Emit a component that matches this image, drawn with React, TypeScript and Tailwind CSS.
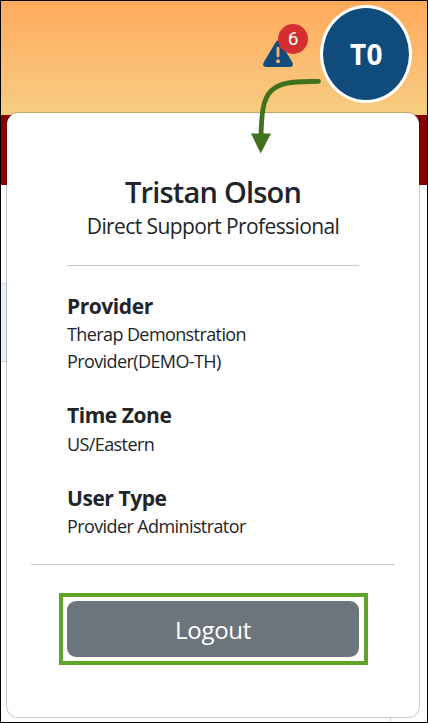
import type { ReactNode } from 'react';

function Detail({ title, children, className }: { title: string; children: ReactNode; className: string }) {
  return (
    <section className={`flex flex-col ${className}`}>
      <h2 className="text-[21px] leading-[28px] font-bold tracking-[-0.45px]">{title}</h2>
      <div className="text-[18px] leading-[27px] tracking-[-0.6px]">{children}</div>
    </section>
  );
}

function AlertButton() {
  return (
    <div className="relative mt-[23px] h-[44px] w-[46px]">
      <svg className="absolute top-[16px] left-0 h-[27px] w-[30px]" viewBox="0 0 30 28" preserveAspectRatio="none">
        <path d="M13 1.8Q15 -1 17 1.8L29.4 23.3Q31 27.5 27.3 28H2.7Q-1 27.5.6 23.3Z" fill="#0f4c7c" />
        <path d="M15 8.5V16.5" stroke="#fcb267" strokeWidth="2.8" strokeLinecap="round" />
        <circle cx="15" cy="22" r="2" fill="#fcb267" />
      </svg>
      <span className="absolute top-0 left-[15px] flex h-[30px] w-[30px] items-center justify-center rounded-full bg-[#d32f2f] pb-px font-['Roboto',sans-serif] text-[19px] leading-none text-white">6</span>
    </div>
  );
}

export default function App() {
  return (
    <div className="relative h-[723px] w-[428px] overflow-hidden border border-black bg-white font-['Open_Sans','Noto_Sans',sans-serif] text-[#212529]">
      <header className="flex h-[114px] justify-end bg-linear-to-b from-[#ffaa5c] to-[#f6cd82] pr-[15px]">
        <AlertButton />
        <div className="mt-[4px] ml-[11px] flex h-[98px] w-[92px] items-center justify-center rounded-[50%] border-3 border-white bg-[#0f4c7c] pb-px pl-px font-['Noto_Sans',sans-serif] text-[28px] font-bold tracking-[0.5px] text-white">T0</div>
      </header>
      <div className="h-[70px] bg-[#880000]" />
      <div className="mt-[98px] h-[79px] w-[20px] border-y border-[#d3d9df] bg-[#e5f1fb]" />
      <div className="ml-[389px] h-[361px] border-l border-[#d5d5d5]" />

      <main className="absolute top-[111px] left-[5px] flex h-[606px] w-[414px] flex-col rounded-[12px] border border-black/20 bg-white bg-clip-padding px-[24px]">
        <div className="mx-[36px] h-[153px] border-b border-[#c8c9ca] pt-[61px] text-center whitespace-nowrap">
          <h1 className="text-[29px] leading-[36px] font-semibold tracking-[-0.8px]">Tristan Olson</h1>
          <p className="text-[21px] leading-[32px] tracking-[-0.6px]">Direct Support Professional</p>
        </div>
        <div className="mx-[36px] pt-[26px]">
          <Detail title="Provider" className="h-[109px] gap-px">Therap Demonstration<br />Provider(DEMO-TH)</Detail>
          <Detail title="Time Zone" className="h-[83px] gap-[2px]">US/Eastern</Detail>
          <Detail title="User Type" className="h-[80px] gap-px">Provider Administrator</Detail>
        </div>
        <div className="h-px bg-[#c8c9ca]" />
        <div className="mx-[28px] mt-[28px] h-[72px] w-[309px] border-4 border-[#5ea526] py-[4px] pr-[5px] pl-[4px]">
          <button className="block h-[56px] w-full rounded-[9px] bg-[#6c757d] text-[24px] leading-[58px] tracking-[-0.3px] text-white">Logout</button>
        </div>
      </main>

      <svg className="absolute top-0 left-0 h-[160px] w-[426px]" viewBox="1 1 426 160">
        <path d="M318.5 81.3C296 82 281 81 271 91C263 99 261.5 113 261 137" fill="none" stroke="#41711c" strokeWidth="4.8" strokeLinecap="round" />
        <path d="M251 133.5H271L260.7 153.5Z" fill="#41711c" />
      </svg>
    </div>
  );
}
